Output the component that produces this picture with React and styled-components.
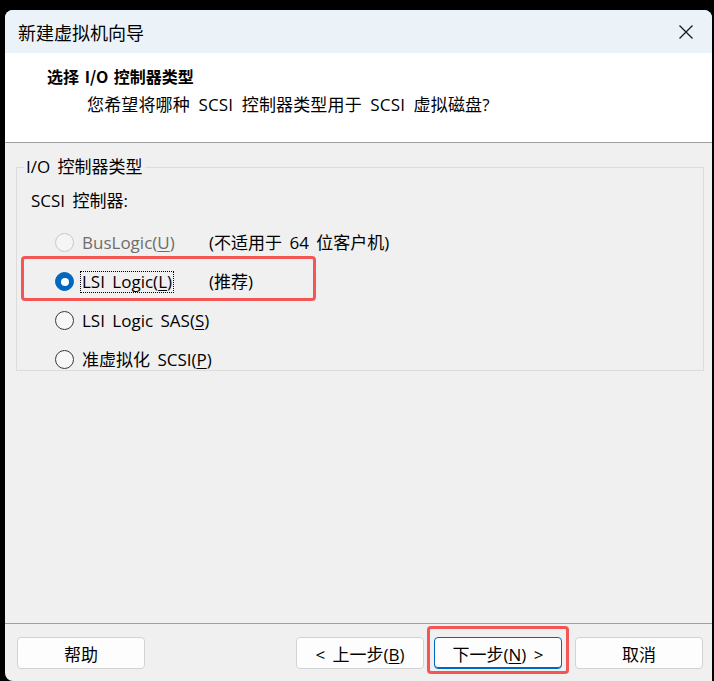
import React from 'react';
import styled, { createGlobalStyle } from 'styled-components';

const UI_FONT = '"Open Sans", "Noto Sans CJK SC", sans-serif';

const GlobalStyle = createGlobalStyle`
  html, body {
    margin: 0;
    padding: 0;
    background: #000;
    overflow: hidden;
  }
  body {
    font-family: ${UI_FONT};
  }
`;

const Window = styled.div`
  margin: 10px 2px 0 5px;
  height: 671px;
  display: flex;
  flex-direction: column;
  background: #f0f0f0;
  border-radius: 8px 8px 0 8px;
  overflow: hidden;
  color: #000;
  word-spacing: 3px;
  white-space: nowrap;
`;

const TitleBar = styled.div`
  height: 43px;
  flex: none;
  display: flex;
  align-items: center;
  justify-content: space-between;
  background: #ebf3f9;
  padding: 0 18px 0 13px;
`;

const TitleText = styled.span`
  font-size: 18px;
  font-family: "Noto Sans CJK SC", sans-serif;
`;

const CloseButton = styled.span`
  display: flex;
  width: 16px;
  height: 16px;
`;

const Header = styled.div`
  height: 90px;
  flex: none;
  background: #fff;
  border-bottom: 1px solid #a0a0a0;
  box-sizing: border-box;
  padding: 11px 0 0 42px;
  display: flex;
  flex-direction: column;
  gap: 5px;
`;

const HeaderTitle = styled.div`
  font-size: 16px;
  font-weight: 700;
  line-height: 24px;
  word-spacing: 2px;
  font-family: "Noto Sans CJK SC", sans-serif;
`;

const HeaderSub = styled.div`
  font-size: 17px;
  line-height: 24px;
  padding-left: 40px;
  word-spacing: 4px;
  letter-spacing: 0.15px;
  font-family: ${UI_FONT};
`;

const Body = styled.div`
  flex: 1;
  padding: 14px 8px 0 11px;
`;

const Group = styled.fieldset`
  margin: 0;
  padding: 0 0 12px 0;
  border: 1px solid #dcdcdc;
  height: 214px;
  box-sizing: border-box;
`;

const Legend = styled.legend`
  margin-left: 7px;
  padding: 0 2px;
  font-size: 17px;
  line-height: 20px;
  font-family: ${UI_FONT};
`;

const GroupLabel = styled.div`
  font-size: 17px;
  line-height: 24px;
  margin: 12px 0 10px 14px;
  font-family: ${UI_FONT};
`;

const Options = styled.div`
  display: flex;
  flex-direction: column;
`;

const OptionRow = styled.div`
  position: relative;
  display: grid;
  grid-template-columns: 154px auto;
  align-items: center;
  height: 39px;
  padding-left: 38px;
  font-size: 17px;
  font-family: ${UI_FONT};
  color: ${(p) => (p.disabled ? '#6d6d6d' : '#000')};
`;

const RadioLabel = styled.span`
  display: flex;
  align-items: center;
  gap: 6px;
`;

const Radio = styled.span`
  width: 19px;
  height: 19px;
  border-radius: 50%;
  box-sizing: border-box;
  flex: none;
  display: flex;
  align-items: center;
  justify-content: center;
  background: ${(p) => (p.checked ? '#0067c0' : p.disabled ? '#f5f5f5' : '#f7f7f7')};
  border: 1px solid ${(p) => (p.checked ? '#0067c0' : p.disabled ? '#c8c8c8' : '#3a3a3a')};

  &::after {
    content: '';
    display: ${(p) => (p.checked ? 'block' : 'none')};
    width: 8px;
    height: 8px;
    border-radius: 50%;
    background: #fff;
  }
`;

const LabelText = styled.span`
  line-height: 20px;
  padding: 0 1px;
  border: 1px dotted ${(p) => (p.focused ? '#000' : 'transparent')};
`;

const Note = styled.span`
  line-height: 20px;
  color: #000;
`;

const Highlight = styled.span`
  position: absolute;
  left: 4px;
  top: -6px;
  width: 295px;
  height: 45px;
  border: 3px solid #f45656;
  border-radius: 4px;
  box-sizing: border-box;
  pointer-events: none;
`;

const Footer = styled.div`
  flex: none;
  height: 58px;
  border-top: 1px solid #a0a0a0;
  box-sizing: border-box;
  display: flex;
  align-items: flex-start;
  padding: 13px 9px 0 12px;
`;

const Spacer = styled.div`
  flex: 1;
`;

const ButtonWrap = styled.span`
  position: relative;
  display: flex;
  margin-left: ${(p) => p.gap || 0}px;
`;

const Button = styled.button`
  width: 128px;
  height: 32px;
  background: #fdfdfd;
  border: 1px solid ${(p) => (p.primary ? '#0067c0' : '#d3d3d3')};
  border-radius: 4px;
  font-size: 17px;
  font-family: ${UI_FONT};
  word-spacing: 3px;
  color: #000;
  padding: 0;
  box-shadow: ${(p) => (p.primary ? 'inset 0 -1px 0 #0067c0' : 'none')};
`;

const ButtonHighlight = styled.span`
  position: absolute;
  left: -7px;
  top: -11px;
  right: -7px;
  bottom: -5px;
  border: 3px solid #f45656;
  border-radius: 4px;
  pointer-events: none;
`;

const U = styled.span`
  text-decoration: underline;
  text-underline-offset: 2px;
`;

export default function App() {
  return (
    <>
      <GlobalStyle />
      <Window>
        <TitleBar>
          <TitleText>新建虚拟机向导</TitleText>
          <CloseButton>
            <svg width="16" height="16" viewBox="0 0 16 16">
              <path d="M1.5 1.5 L14.5 14.5 M14.5 1.5 L1.5 14.5" stroke="#1a1a1a" strokeWidth="1.3" fill="none" />
            </svg>
          </CloseButton>
        </TitleBar>
        <Header>
          <HeaderTitle>选择 I/O 控制器类型</HeaderTitle>
          <HeaderSub>您希望将哪种 SCSI 控制器类型用于 SCSI 虚拟磁盘?</HeaderSub>
        </Header>
        <Body>
          <Group>
            <Legend>I/O 控制器类型</Legend>
            <GroupLabel>SCSI 控制器:</GroupLabel>
            <Options>
              <OptionRow disabled>
                <RadioLabel>
                  <Radio disabled />
                  <LabelText>BusLogic(<U>U</U>)</LabelText>
                </RadioLabel>
                <Note>(不适用于 64 位客户机)</Note>
              </OptionRow>
              <OptionRow>
                <RadioLabel>
                  <Radio checked />
                  <LabelText focused>LSI Logic(<U>L</U>)</LabelText>
                </RadioLabel>
                <Note>(推荐)</Note>
                <Highlight />
              </OptionRow>
              <OptionRow>
                <RadioLabel>
                  <Radio />
                  <LabelText>LSI Logic SAS(<U>S</U>)</LabelText>
                </RadioLabel>
              </OptionRow>
              <OptionRow>
                <RadioLabel>
                  <Radio />
                  <LabelText>准虚拟化 SCSI(<U>P</U>)</LabelText>
                </RadioLabel>
              </OptionRow>
            </Options>
          </Group>
        </Body>
        <Footer>
          <Button>帮助</Button>
          <Spacer />
          <Button>&lt; 上一步(<U>B</U>)</Button>
          <ButtonWrap gap={10}>
            <Button primary>下一步(<U>N</U>) &gt;</Button>
            <ButtonHighlight />
          </ButtonWrap>
          <ButtonWrap gap={13}>
            <Button>取消</Button>
          </ButtonWrap>
        </Footer>
      </Window>
    </>
  );
}
